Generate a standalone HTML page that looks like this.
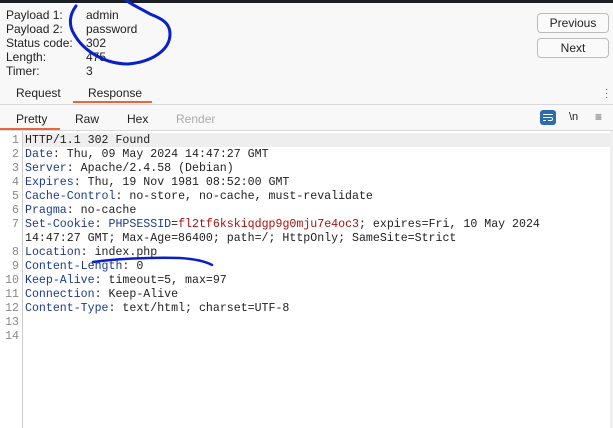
<!DOCTYPE html>
<html><head><style>
body{margin:0;width:613px;height:428px;background:#fff;position:relative;overflow:hidden;font-family:"Liberation Sans",sans-serif;color:#222}
.a{position:absolute;white-space:pre}
.top{position:absolute;left:0;top:0;width:613px;height:3px;background:#1c1f26}
.hdr{position:absolute;left:0;top:3px;width:613px;height:101px;background:#f8f8f8;border-bottom:1px solid #d8d8d8}
.sub{position:absolute;left:0;top:105px;width:613px;height:25px;background:#f8f8f8;border-bottom:1px solid #d8d8d8}
.lbl{font-size:12px;line-height:14px}
.btn{position:absolute;left:537px;width:70px;height:18px;border:1px solid #bbb;border-radius:4px;background:#fafafa;font-size:12px;text-align:center;line-height:18px}
.code{position:absolute;left:0;top:134px;font-family:"Liberation Mono",monospace;font-size:11.6px;line-height:14px}
.ln{position:absolute;left:0;width:19px;text-align:right;color:#888}
.cl{position:absolute;left:25px;white-space:pre;color:#222}
.k{color:#1e3a8c}.r{color:#a11}
.t{font-size:12px}
</style></head><body>
<div class="top"></div>
<div class="hdr"></div>
<div class="a lbl" style="left:6px;top:8px">Payload 1:<br>Payload 2:<br>Status code:<br>Length:<br>Timer:</div>
<div class="a lbl" style="left:86px;top:8px">admin<br>password<br>302<br>475<br>3</div>
<div class="btn" style="top:13px">Previous</div>
<div class="btn" style="top:38px">Next</div>
<div class="a" style="left:605px;top:88px;font-size:10px;line-height:4px;color:#555">·<br>·<br>·</div>
<div class="a t" style="left:16px;top:86px">Request</div>
<div class="a t" style="left:88px;top:86px">Response</div>
<div class="a" style="left:73px;top:101px;width:79px;height:2px;background:#e8663a"></div>
<div class="sub"></div>
<div class="a t" style="left:16px;top:112px">Pretty</div>
<div class="a t" style="left:75px;top:112px">Raw</div>
<div class="a t" style="left:127px;top:112px">Hex</div>
<div class="a t" style="left:176px;top:112px;color:#aaa">Render</div>
<div class="a" style="left:0;top:128px;width:60px;height:2px;background:#e8663a"></div>
<div class="a" style="left:540px;top:110px;width:16px;height:15px;background:#2b6cb0;border-radius:3px"></div>
<svg class="a" style="left:543px;top:113px" width="10" height="9"><path d="M0 1.5H10M0 4.5H8a1.5 1.5 0 0 1 0 3H5M0 7.5H3" stroke="#fff" fill="none" stroke-width="1"/></svg>
<div class="a" style="left:569px;top:111px;font-size:11px">\n</div>
<div class="a" style="left:595px;top:110px;font-size:12px;color:#555">≡</div>
<div class="a" style="left:22px;top:131px;width:1px;height:297px;background:#ccc"></div>
<div class="a" style="left:23px;top:133px;width:587px;height:14px;background:#eeeeee"></div>
<div class="a" style="left:610px;top:131px;width:3px;height:297px;background:#f0f0f0"></div>
<div class="code">
<div class="ln" style="top:0">1</div><div class="cl" style="top:0">HTTP/1.1 302 Found</div>
<div class="ln" style="top:14px">2</div><div class="cl" style="top:14px"><span class="k">Date</span>: Thu, 09 May 2024 14:47:27 GMT</div>
<div class="ln" style="top:28px">3</div><div class="cl" style="top:28px"><span class="k">Server</span>: Apache/2.4.58 (Debian)</div>
<div class="ln" style="top:42px">4</div><div class="cl" style="top:42px"><span class="k">Expires</span>: Thu, 19 Nov 1981 08:52:00 GMT</div>
<div class="ln" style="top:56px">5</div><div class="cl" style="top:56px"><span class="k">Cache-Control</span>: no-store, no-cache, must-revalidate</div>
<div class="ln" style="top:70px">6</div><div class="cl" style="top:70px"><span class="k">Pragma</span>: no-cache</div>
<div class="ln" style="top:84px">7</div><div class="cl" style="top:84px"><span class="k">Set-Cookie</span>: <span class="k">PHPSESSID</span>=<span class="r">fl2tf6kskiqdgp9g0mju7e4oc3</span>; expires=Fri, 10 May 2024</div>
<div class="cl" style="top:98px">14:47:27 GMT; Max-Age=86400; path=/; HttpOnly; SameSite=Strict</div>
<div class="ln" style="top:112px">8</div><div class="cl" style="top:112px"><span class="k">Location</span>: index.php</div>
<div class="ln" style="top:126px">9</div><div class="cl" style="top:126px"><span class="k">Content-Length</span>: 0</div>
<div class="ln" style="top:140px">10</div><div class="cl" style="top:140px"><span class="k">Keep-Alive</span>: timeout=5, max=97</div>
<div class="ln" style="top:154px">11</div><div class="cl" style="top:154px"><span class="k">Connection</span>: Keep-Alive</div>
<div class="ln" style="top:168px">12</div><div class="cl" style="top:168px"><span class="k">Content-Type</span>: text/html; charset=UTF-8</div>
<div class="ln" style="top:182px">13</div>
<div class="ln" style="top:196px">14</div>
</div>
<svg class="a" style="left:0;top:0" width="613" height="428">
<path d="M76 6C70 14 68 24 74 34C84 52 106 64 128 64C152 62 170 50 170 34C170 22 160 18 150 14C140 8 130 4 126 0" stroke="#0a1fc8" stroke-width="3" fill="none" stroke-linecap="round"/>
<path d="M93 262C115 259 150 257 180 258C195 259 205 261 212 265" stroke="#0a1fc8" stroke-width="2.5" fill="none" stroke-linecap="round"/>
</svg>
</body></html>
